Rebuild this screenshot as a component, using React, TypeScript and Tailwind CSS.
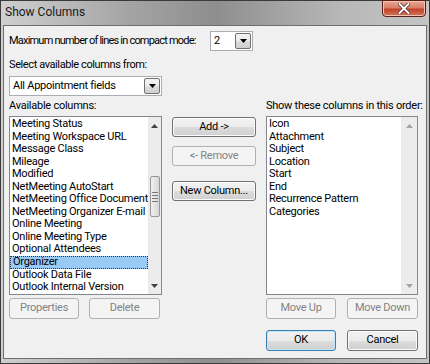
import React from 'react'

const font = { fontFamily: 'Roboto, "Liberation Sans", sans-serif' }

const available = [
  'Meeting Status',
  'Meeting Workspace URL',
  'Message Class',
  'Mileage',
  'Modified',
  'NetMeeting AutoStart',
  'NetMeeting Office Document',
  'NetMeeting Organizer E-mail',
  'Online Meeting',
  'Online Meeting Type',
  'Optional Attendees',
  'Organizer',
  'Outlook Data File',
  'Outlook Internal Version',
]

const shown = ['Icon', 'Attachment', 'Subject', 'Location', 'Start', 'End', 'Recurrence Pattern', 'Categories']

function Arrow({ up, disabled }: { up?: boolean; disabled?: boolean }) {
  return (
    <svg width="7" height="4" viewBox="0 0 7 4">
      <path d={up ? 'M0 4 L3.5 0 L7 4 Z' : 'M0 0 L3.5 4 L7 0 Z'} fill={disabled ? '#a3a3a3' : '#404040'} />
    </svg>
  )
}

function Button({ label, disabled, primary, className = '' }: { label: string; disabled?: boolean; primary?: boolean; className?: string }) {
  if (disabled) {
    return (
      <div className={`flex items-center justify-center rounded-[3px] border border-[#adb2b5] bg-[#f4f4f4] text-[#838383] ${className}`}>
        {label}
      </div>
    )
  }
  return (
    <div
      className={`flex items-center justify-center rounded-[3px] border ${primary ? 'border-[#3c7fb1] shadow-[inset_0_0_0_1px_#bfe6fb]' : 'border-[#707070] shadow-[inset_0_0_0_1px_#fcfcfc]'} bg-[linear-gradient(to_bottom,#f2f2f2_0%,#ebebeb_50%,#dddddd_51%,#cfcfcf_100%)] text-black ${className}`}
    >
      {label}
    </div>
  )
}

function Combo({ value, className = '' }: { value: string; className?: string }) {
  return (
    <div className={`flex items-center border border-[#abadb3] bg-white pl-[3px] pr-[1px] ${className}`}>
      <span className="flex-1 whitespace-nowrap">{value}</span>
      <div className="flex h-[16px] w-[16px] items-center justify-center rounded-[2px] border border-[#707070] bg-[linear-gradient(to_bottom,#f2f2f2_0%,#ebebeb_50%,#dddddd_51%,#cfcfcf_100%)]">
        <svg width="7" height="4" viewBox="0 0 7 4">
          <path d="M0 0 L3.5 4 L7 0 Z" fill="#000" />
        </svg>
      </div>
    </div>
  )
}

function ScrollBar({ disabled }: { disabled?: boolean }) {
  return (
    <div className="flex w-[16px] flex-col border-l border-[#e9e9e9] bg-[#ececec]">
      <div className="flex h-[17px] items-center justify-center">
        <Arrow up disabled={disabled} />
      </div>
      {!disabled && (
        <>
          <div className="h-[42px]" />
          <div className="mx-px flex h-[41px] flex-col items-center justify-center gap-[2px] rounded-[2px] border border-[#979797] bg-[linear-gradient(to_right,#f1f1f1,#e3e3e3_50%,#d6d6d6)]">
            <div className="h-px w-[6px] bg-[#7c7c7c]" />
            <div className="h-px w-[6px] bg-[#7c7c7c]" />
            <div className="h-px w-[6px] bg-[#7c7c7c]" />
            <div className="h-px w-[6px] bg-[#7c7c7c]" />
          </div>
        </>
      )}
      <div className="flex-1" />
      <div className="flex h-[17px] items-center justify-center">
        <Arrow disabled={disabled} />
      </div>
    </div>
  )
}

export default function App() {
  return (
    <div className="flex h-[364px] w-[430px] flex-col border border-[#3a3a3a] bg-[linear-gradient(to_right,#cfcfcf,#a4a4a4_30%,#8e8e8e_50%,#b8b8b8_80%,#c4c4c4)] text-[11px] tracking-[-0.25px] text-black" style={font}>
      {/* Title bar */}
      <div className="relative flex h-[24px] items-center pl-[4px] text-[12px] tracking-normal text-[#1a1a1a]">
        <span className="mt-[-2px]">Show Columns</span>
        <div className="absolute right-[3px] top-[-1px] flex h-[17px] w-[44px] items-center justify-center rounded-b-[4px] border border-[#5a1e14] bg-[linear-gradient(to_bottom,#e9a793_0%,#d98067_45%,#c0442a_55%,#d4745a_100%)] shadow-[inset_0_0_0_1px_#f3c2b3]">
          <svg width="12" height="11" viewBox="0 0 12 11">
            <path d="M1.5 1 L10.5 10 M10.5 1 L1.5 10" stroke="#4a2020" strokeWidth="3.4" strokeLinecap="round" />
            <path d="M1.5 1 L10.5 10 M10.5 1 L1.5 10" stroke="#fff" strokeWidth="2" strokeLinecap="round" />
          </svg>
        </div>
      </div>

      {/* Client area */}
      <div className="mx-[2px] mb-[4px] flex flex-1 flex-col border border-[#6e6e6e] bg-[#f0f0f0] pl-[5px] pr-[8px] pt-[5px]">
        <div className="flex h-[20px] items-center">
          <span className="w-[201px] whitespace-nowrap tracking-[-0.8px]">Maximum number of lines in compact mode:</span>
          <Combo value="2" className="h-[20px] w-[43px]" />
        </div>
        <div className="mt-[7px] leading-[13px] tracking-[-0.4px]">Select available columns from:</div>
        <Combo value="All Appointment fields" className="mt-[5px] h-[20px] w-[153px]" />

        <div className="mt-[3px] flex">
          {/* Left column */}
          <div className="flex w-[153px] flex-col">
            <div className="h-[13px] leading-[13px]">Available columns:</div>
            <div className="mt-[4px] flex h-[179px] border border-[#828790] bg-white">
              <div className="flex-1 pt-px leading-[12.55px]">
                {available.map((item) => (
                  <div
                    key={item}
                    className={`h-[12.55px] whitespace-nowrap overflow-hidden pl-[2px] ${item === 'Organizer' ? 'border border-dotted border-[#333] bg-[#99c9f5] pl-[1px] leading-[10.55px]' : ''}`}
                  >
                    {item}
                  </div>
                ))}
              </div>
              <ScrollBar />
            </div>
            <div className="mt-[3px] flex h-[21px] gap-[10px]">
              <Button label="Properties" disabled className="w-[70px]" />
              <Button label="Delete" disabled className="w-[71px]" />
            </div>
          </div>

          {/* Middle buttons */}
          <div className="ml-[10px] flex w-[84px] flex-col pt-[18px]">
            <Button label="Add ->" className="h-[20px]" />
            <Button label="<- Remove" disabled className="mt-[9px] h-[20px]" />
            <Button label="New Column..." className="mt-[15px] h-[20px]" />
          </div>

          {/* Right column */}
          <div className="ml-[10px] flex w-[152px] flex-col">
            <div className="h-[13px] whitespace-nowrap leading-[13px]">Show these columns in this order:</div>
            <div className="mt-[4px] flex h-[179px] border border-[#828790] bg-white">
              <div className="flex-1 pl-[2px] pt-px leading-[12.55px]">
                {shown.map((item) => (
                  <div key={item} className="h-[12.55px] whitespace-nowrap">
                    {item}
                  </div>
                ))}
              </div>
              <ScrollBar disabled />
            </div>
            <div className="mt-[3px] flex h-[21px] gap-[11px]">
              <Button label="Move Up" disabled className="w-[70px]" />
              <Button label="Move Down" disabled className="w-[71px]" />
            </div>
            <div className="mt-[11px] flex h-[21px] gap-[11px]">
              <Button label="OK" primary className="w-[70px]" />
              <Button label="Cancel" className="w-[71px]" />
            </div>
          </div>
        </div>
      </div>
    </div>
  )
}
